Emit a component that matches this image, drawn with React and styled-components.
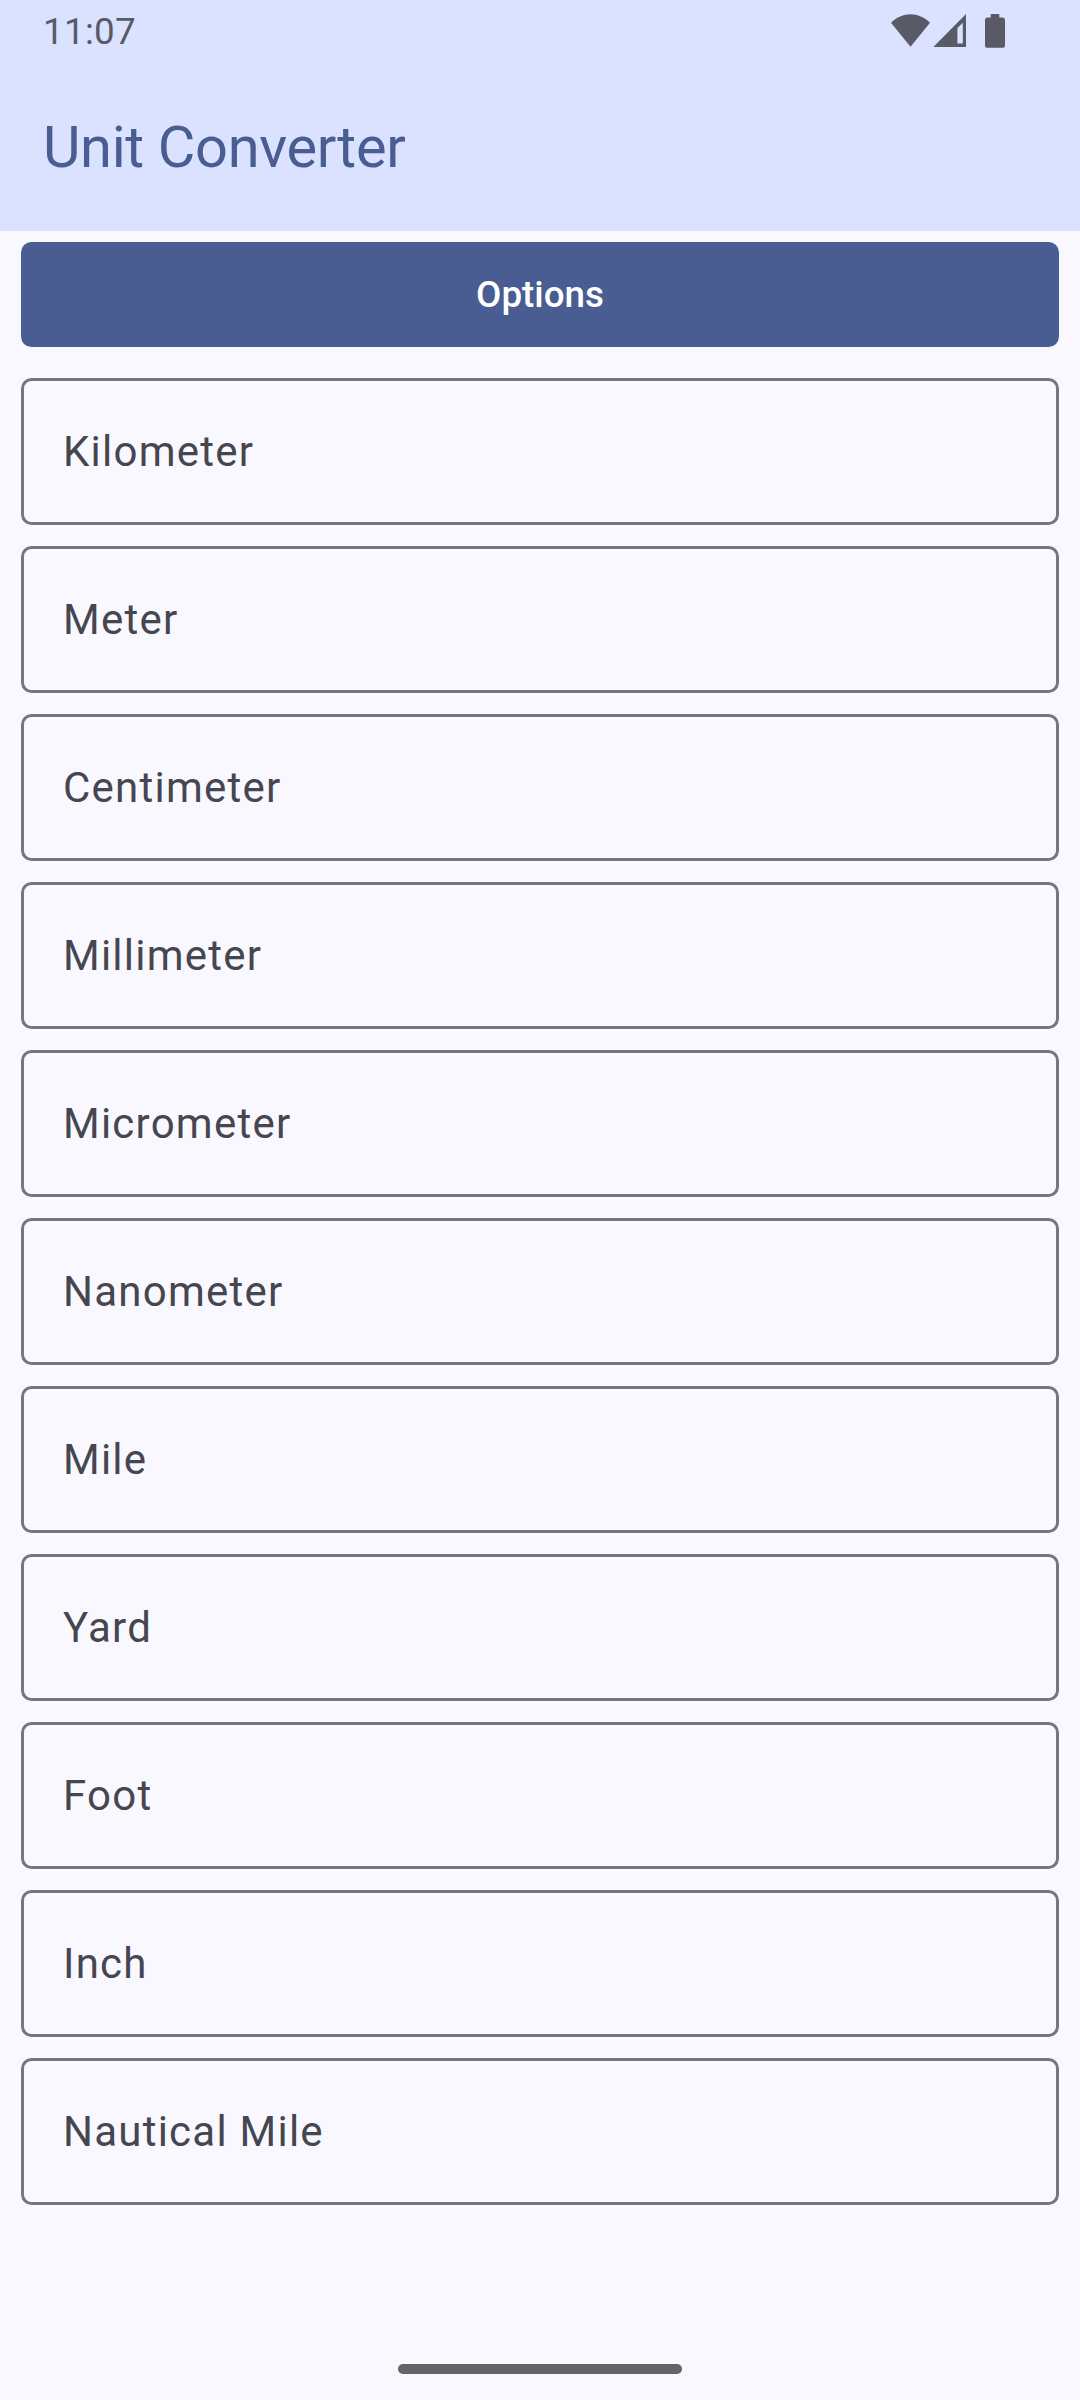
import React from "react";
import styled, { createGlobalStyle } from "styled-components";

const GlobalStyle = createGlobalStyle`
  *, *::before, *::after { box-sizing: border-box; }
  body { margin: 0; background: #faf8ff; }
`;

const Screen = styled.div`
  width: 1080px;
  height: 2400px;
  display: flex;
  flex-direction: column;
  background: #faf8ff;
  font-family: Roboto, "Liberation Sans", sans-serif;
  overflow: hidden;
`;

const Header = styled.header`
  height: 231px;
  flex: none;
  background: #dae2ff;
`;

const StatusBar = styled.div`
  height: 63px;
  padding: 0 74px 0 43px;
  display: flex;
  align-items: center;
  justify-content: space-between;
`;

const Clock = styled.span`
  font-size: 36.75px;
  letter-spacing: 0.3px;
  line-height: 43px;
  color: #585a66;
`;

const StatusIcons = styled.svg`
  display: block;
  width: 116px;
  height: 63px;
  fill: #585a66;
`;

const Title = styled.h1`
  margin: 0;
  height: 168px;
  padding-left: 43px;
  font-size: 57.75px;
  font-weight: 400;
  letter-spacing: -0.35px;
  line-height: 168px;
  color: #495d92;
`;

const Content = styled.main`
  flex: 1;
  display: flex;
  flex-direction: column;
  padding: 11px 21px 0;
`;

const OptionsButton = styled.button`
  height: 105px;
  padding: 0;
  border: 0;
  border-radius: 10.5px;
  background: #495d92;
  color: #ffffff;
  font-family: inherit;
  font-size: 36.75px;
  font-weight: 500;
  letter-spacing: 0;
  line-height: 43px;
`;

const UnitList = styled.div`
  display: flex;
  flex-direction: column;
  gap: 21px;
  margin-top: 31px;
`;

const UnitField = styled.div`
  height: 147px;
  display: flex;
  align-items: center;
  padding: 0 39px;
  border: 3px solid #757680;
  border-radius: 10.5px;
  color: #45464f;
  font-size: 42px;
  letter-spacing: 1.24px;
  line-height: 63px;
`;

const NavigationBar = styled.footer`
  height: 63px;
  flex: none;
  display: flex;
  justify-content: center;
  align-items: flex-start;
  padding-top: 27px;
`;

const Handle = styled.div`
  width: 284px;
  height: 10px;
  border-radius: 5px;
  background: #646466;
`;

const units = [
  "Kilometer",
  "Meter",
  "Centimeter",
  "Millimeter",
  "Micrometer",
  "Nanometer",
  "Mile",
  "Yard",
  "Foot",
  "Inch",
  "Nautical Mile",
];

export default function App() {
  return (
    <>
      <GlobalStyle />
      <Screen>
        <Header>
          <StatusBar>
            <Clock>11:07</Clock>
            <StatusIcons viewBox="890 0 116 63" aria-hidden="true">
              <path d="M891 22.8C902.5 11.4 918.5 11.4 930 22.8L910.5 46.7Z" />
              <path
                fillRule="evenodd"
                d="M966 14V47H933.3ZM962.8 22.8L957.4 28V43.6H962.8Z"
              />
              <path d="M990.7 14H999.3V17.4H1002.5Q1005 17.4 1005 20V45.2Q1005 47.8 1002.4 47.8H987.6Q985 47.8 985 45.2V20Q985 17.4 987.5 17.4H990.7Z" />
            </StatusIcons>
          </StatusBar>
          <Title>Unit Converter</Title>
        </Header>
        <Content>
          <OptionsButton type="button">Options</OptionsButton>
          <UnitList>
            {units.map((unit) => (
              <UnitField key={unit}>{unit}</UnitField>
            ))}
          </UnitList>
        </Content>
        <NavigationBar>
          <Handle />
        </NavigationBar>
      </Screen>
    </>
  );
}
